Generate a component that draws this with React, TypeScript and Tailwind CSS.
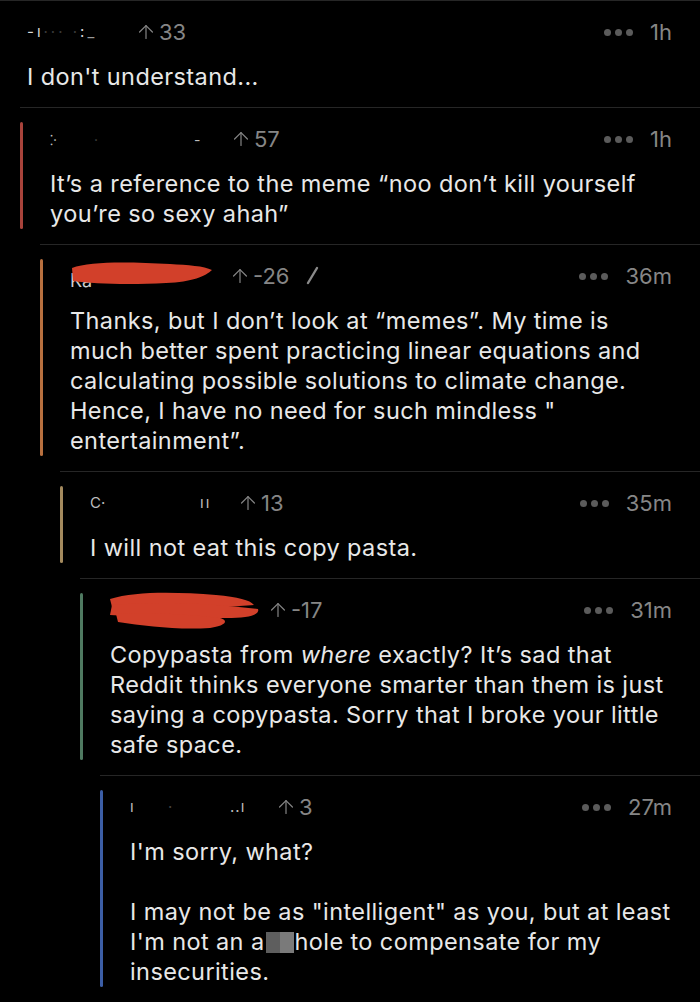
import React from 'react';
import { ArrowUp } from 'lucide-react';

type Comment = {
  id: number;
  depth: number;
  bar: string;
  score: string;
  time: string;
  edited?: boolean;
  user: React.ReactNode;
  body: React.ReactNode;
};

// indentation per nesting level, 20px steps
const indent = ['ml-0', 'ml-[20px]', 'ml-[40px]', 'ml-[60px]', 'ml-[80px]', 'ml-[100px]'];

const Scribble: React.FC<{ variant: 'a' | 'b' }> = ({ variant }) =>
  variant === 'a' ? (
    <svg className="absolute left-[0px] top-[-2px]" width="144" height="28" viewBox="0 0 144 28">
      <path
        d="M2 8 C20 1 60 2 100 4 C118 5 134 6 142 10 C136 16 122 22 96 23 C60 25 24 24 3 21 Z"
        fill="#d2402a"
      />
    </svg>
  ) : (
    <svg className="absolute left-[-4px] top-[-6px]" width="158" height="42" viewBox="0 0 158 42">
      <path d="M4 9 C30 1 70 2 110 5 C132 7 144 10 148 15 C120 18 60 17 6 17 Z" fill="#d2402a" />
      <path d="M6 15 C50 11 100 13 152 19 C154 25 142 28 120 28 C80 28 40 27 4 25 Z" fill="#d2402a" />
      <path d="M10 24 C40 22 80 24 114 28 C124 31 118 36 104 38 C70 40 40 36 12 32 Z" fill="#d2402a" />
    </svg>
  );

const Censor = () => (
  <span className="inline-flex align-[-3px] mx-[1px]">
    <span className="inline-block w-[14px] h-[21px] bg-[#5e5e5e]" />
    <span className="inline-block w-[14px] h-[21px] bg-[#7a7a7a]" />
  </span>
);

const comments: Comment[] = [
  {
    id: 1,
    depth: 0,
    bar: '',
    score: '33',
    time: '1h',
    user: (
      <span className="w-[96px] text-[#d8d8d8] text-[15px] tracking-[3px] whitespace-nowrap">
        -ı<span className="text-[#3a3a3a]">··· ·</span>:<span className="text-[#9a9a9a]">_</span>
      </span>
    ),
    body: <>I don't understand...</>,
  },
  {
    id: 2,
    depth: 1,
    bar: 'bg-[#a8433b]',
    score: '57',
    time: '1h',
    user: (
      <span className="w-[168px] text-[#bdbdbd] text-[14px] whitespace-nowrap flex">
        <span className="w-[44px]">⁚·</span>
        <span className="w-[100px] text-[#444]">·</span>
        <span>-</span>
      </span>
    ),
    body: (
      <>
        It’s a reference to the meme “noo don’t kill yourself
        <br />
        you’re so sexy ahah”
      </>
    ),
  },
  {
    id: 3,
    depth: 2,
    bar: 'bg-[#b8703f]',
    score: '-26',
    time: '36m',
    edited: true,
    user: (
      <span className="relative w-[147px] h-[28px] text-[#cfcfcf] text-[18px] whitespace-nowrap">
        <span className="absolute left-0 top-[5px]">Ka</span>
        <Scribble variant="a" />
      </span>
    ),
    body: (
      <>
        Thanks, but I don’t look at “memes”. My time is
        <br />
        much better spent practicing linear equations and
        <br />
        calculating possible solutions to climate change.
        <br />
        Hence, I have no need for such mindless "
        <br />
        entertainment”.
      </>
    ),
  },
  {
    id: 4,
    depth: 3,
    bar: 'bg-[#a48a5e]',
    score: '13',
    time: '35m',
    user: (
      <span className="w-[135px] text-[#bdbdbd] text-[15px] whitespace-nowrap flex">
        <span className="w-[110px]">C·</span>
        <span className="tracking-[2px]">ıı</span>
      </span>
    ),
    body: <>I will not eat this copy pasta.</>,
  },
  {
    id: 5,
    depth: 4,
    bar: 'bg-[#4f7a61]',
    score: '-17',
    time: '31m',
    user: (
      <span className="relative w-[145px] h-[28px]">
        <Scribble variant="b" />
      </span>
    ),
    body: (
      <>
        Copypasta from <em>where</em> exactly? It’s sad that
        <br />
        Reddit thinks everyone smarter than them is just
        <br />
        saying a copypasta. Sorry that I broke your little
        <br />
        safe space.
      </>
    ),
  },
  {
    id: 6,
    depth: 5,
    bar: 'bg-[#3c5ea6]',
    score: '3',
    time: '27m',
    user: (
      <span className="w-[133px] text-[#bdbdbd] text-[15px] whitespace-nowrap flex">
        <span className="w-[38px]">ı</span>
        <span className="w-[62px] text-[#444]">·</span>
        <span className="tracking-[1px]">..ı</span>
      </span>
    ),
    body: (
      <>
        I'm sorry, what?
        <br />
        <br />
        I may not be as "intelligent" as you, but at least
        <br />
        I'm not an a<Censor />hole to compensate for my
        <br />
        insecurities.
      </>
    ),
  },
];

const CommentRow: React.FC<{ c: Comment }> = ({ c }) => (
  <div className={`${indent[c.depth]} border-t border-[#262626] flex pt-[14px] pb-[15px] pr-[28px]`}>
    {c.depth > 0 && <div className={`w-[3px] shrink-0 rounded-full ${c.bar}`} />}
    <div className="flex-1 pl-[27px]">
      <div className="flex items-center h-[34px] text-[22px] text-[#868686]">
        {c.user}
        <span className="flex items-center ml-[12px]">
          <ArrowUp size={22} strokeWidth={1.3} className="text-[#868686]" />
          <span className="ml-[2px]">{c.score}</span>
        </span>
        {c.edited && (
          <svg className="ml-[16px]" width="14" height="20" viewBox="0 0 14 20">
            <path d="M12 2 L3 17" stroke="#8a8a8a" strokeWidth="2.4" strokeLinecap="round" />
          </svg>
        )}
        <span className="ml-auto flex items-center gap-[4px]">
          <span className="w-[7px] h-[7px] rounded-full bg-[#5b5b5b]" />
          <span className="w-[7px] h-[7px] rounded-full bg-[#5b5b5b]" />
          <span className="w-[7px] h-[7px] rounded-full bg-[#5b5b5b]" />
        </span>
        <span className="ml-[17px]">{c.time}</span>
      </div>
      <div className="mt-[13px] text-[23.5px] tracking-[0.4px] leading-[30px] text-[#e8e8e8] whitespace-nowrap">
        {c.body}
      </div>
    </div>
  </div>
);

export default function App() {
  return (
    <div className="w-[700px] h-[1002px] overflow-hidden bg-black font-['Inter',sans-serif]">
      {comments.map((c) => (
        <CommentRow key={c.id} c={c} />
      ))}
    </div>
  );
}
